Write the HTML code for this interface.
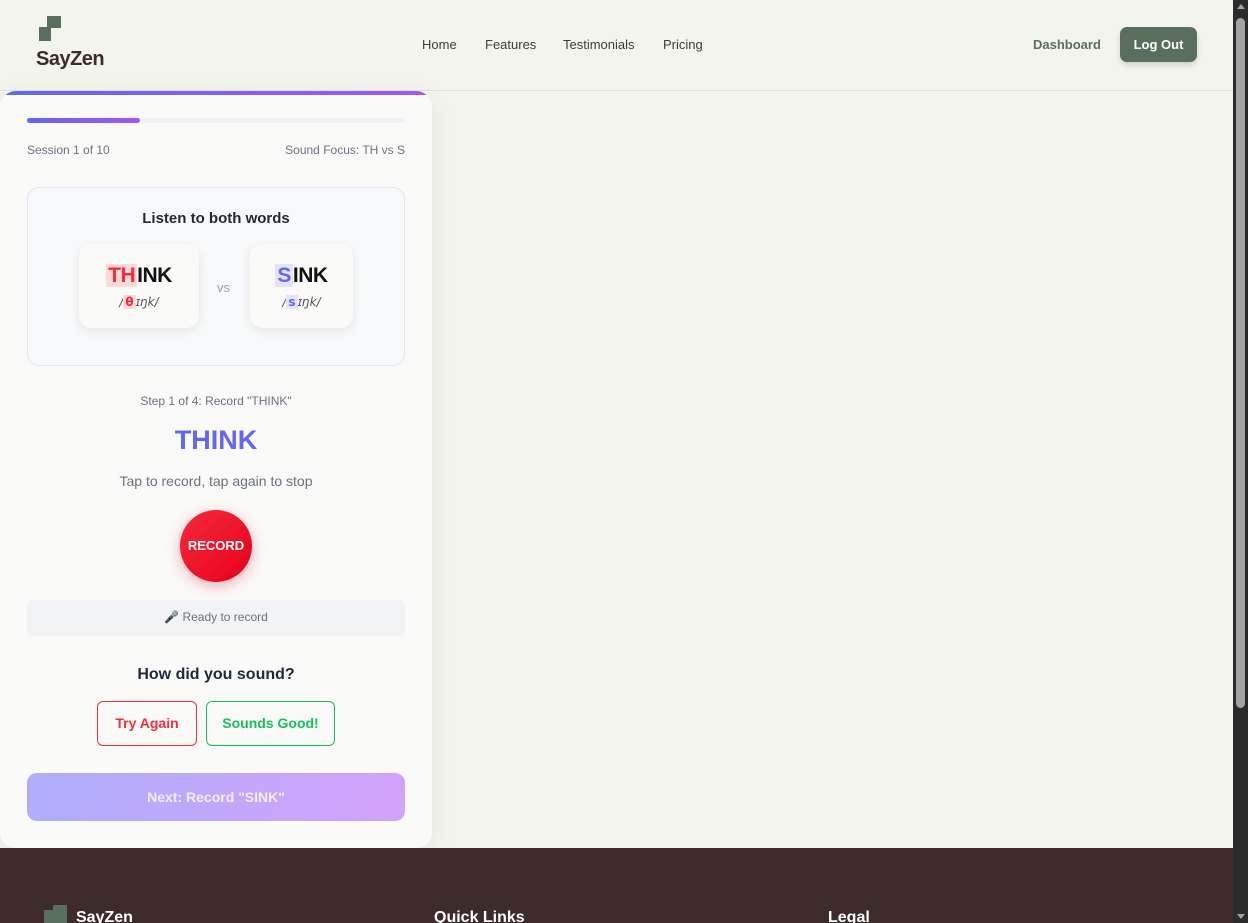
<!DOCTYPE html>
<html><head><meta charset="utf-8"><style>
*{box-sizing:border-box;margin:0;padding:0}
html,body{width:1248px;height:923px;overflow:hidden}
body{background:#f4f4ef;font-family:"Liberation Sans",sans-serif;position:relative}
.sb{position:absolute;right:0;top:0;width:15px;height:923px;background:#2b2b2b}
.sb i{position:absolute;left:3px;top:18px;width:9px;height:690px;background:#a3a3a3;border-radius:5px}
.sb b{position:absolute;left:4px;top:4px;border:4px solid transparent;border-bottom:5px solid #a3a3a3;border-top:0}
.sb u{position:absolute;left:4px;bottom:4px;border:4px solid transparent;border-top:5px solid #a3a3a3;border-bottom:0}
header{position:absolute;left:0;top:0;width:1233px;height:91px;border-bottom:1px solid #e4e4df}
.logo{position:absolute;left:36px;top:16px}
.logo .s1{position:absolute;left:11px;top:0;width:14px;height:12px;background:#5a6e5e}
.logo .s2{position:absolute;left:3px;top:11px;width:12px;height:14px;background:#5a6e5e}
.logo .t{position:absolute;left:0;top:32px;font-size:20px;font-weight:bold;color:#3d2b2b;white-space:nowrap;letter-spacing:-.5px}
nav a{position:absolute;top:37px;font-size:13px;color:#3d3d3d}
.dash{position:absolute;left:1033px;top:37px;font-size:13px;font-weight:bold;color:#5a6e5e}
.lo{position:absolute;left:1120px;top:27px;width:77px;height:35px;background:#5a6e5e;border-radius:7px;color:#fff;font-size:13px;font-weight:bold;text-align:center;line-height:35px;box-shadow:0 3px 6px rgba(0,0,0,.15)}
.card{position:absolute;left:0;top:91px;width:432px;height:757px;background:#fafaf8;border-radius:16px;box-shadow:0 4px 30px rgba(0,0,0,.06);overflow:hidden}
.card:before{content:"";position:absolute;left:0;top:0;right:0;height:4px;background:linear-gradient(90deg,#6366f1,#a855f7)}
.pb{position:absolute;left:27px;top:27px;width:378px;height:5px;background:#f1f1f5;border-radius:3px}
.pb i{display:block;width:113px;height:5px;background:linear-gradient(90deg,#6366f1,#a855f7);border-radius:3px}
.sm{position:absolute;top:52px;font-size:12px;color:#6b7280}
.box{position:absolute;left:27px;top:96px;width:378px;height:179px;border:1px solid #e3e6ec;border-radius:12px;background:#f8f9fa}
.c{position:absolute;left:0;width:100%;text-align:center}
.w{position:absolute;top:56px;height:84px;background:#fafaf8;border-radius:12px;box-shadow:0 3px 10px rgba(0,0,0,.08);text-align:center}
.w .big{margin-top:19px;font-size:21px;line-height:26px;font-weight:bold;color:#111;letter-spacing:-.5px}
.w .ph{margin-top:6px;font-size:12px;font-style:italic;color:#555;font-family:"DejaVu Sans",sans-serif}
.hr{background:#fdd9d9;color:#ef2e3e;padding:0 2px}
.hb{background:#e3e3fb;color:#6366f1;padding:0 2px}
.rec{position:absolute;left:180px;top:419px;width:72px;height:72px;border-radius:50%;background:linear-gradient(135deg,#f72a3a,#e5001c);box-shadow:0 4px 14px rgba(239,30,50,.35);color:#fff;font-size:13px;font-weight:bold;text-align:center;line-height:72px}
.st{position:absolute;left:27px;top:509px;width:378px;height:36px;background:#f2f3f5;border-radius:6px;text-align:center;line-height:34px;font-size:12px;color:#6b7280}
.b{position:absolute;top:610px;height:45px;border-radius:6px;font-size:14px;font-weight:bold;text-align:center;line-height:43px}
.nx{position:absolute;left:27px;top:682px;width:378px;height:48px;border-radius:10px;background:linear-gradient(110deg,#aeaefc,#d4a2fb);color:#f3eeff;font-size:14px;font-weight:bold;text-align:center;line-height:48px}
footer{position:absolute;left:0;top:848px;width:1233px;height:75px;background:#3d2b2c;color:#fff}
footer .h{position:absolute;top:61px;font-size:16px;font-weight:bold}
</style></head><body>
<header>
<div class="logo"><div class="s1"></div><div class="s2"></div><div class="t">SayZen</div></div>
<nav><a style="left:422px">Home</a><a style="left:485px">Features</a><a style="left:563px">Testimonials</a><a style="left:663px">Pricing</a></nav>
<div class="dash">Dashboard</div><div class="lo">Log Out</div>
</header>
<div class="card">
<div class="pb"><i></i></div>
<div class="sm" style="left:27px">Session 1 of 10</div>
<div class="sm" style="right:27px">Sound Focus: TH vs S</div>
<div class="box">
<div class="c" style="top:22px;font-size:15px;font-weight:bold;color:#1f2937">Listen to both words</div>
<div class="w" style="left:51px;width:120px"><div class="big"><span class="hr">TH</span>INK</div><div class="ph">/<span class="hr" style="font-style:normal;font-weight:bold">θ</span>ɪŋk/</div></div>
<div style="position:absolute;left:189px;top:92px;font-size:13px;color:#9ca3af">vs</div>
<div class="w" style="left:222px;width:103px"><div class="big"><span class="hb">S</span>INK</div><div class="ph">/<span class="hb" style="font-style:normal;font-weight:bold">s</span>ɪŋk/</div></div>
</div>
<div class="c" style="top:303px;font-size:12px;color:#6b7280">Step 1 of 4: Record "THINK"</div>
<div class="c" style="top:334px;font-size:27px;font-weight:bold;color:#6366f1">THINK</div>
<div class="c" style="top:382px;font-size:14px;color:#6b7280">Tap to record, tap again to stop</div>
<div class="rec">RECORD</div>
<div class="st">🎤 Ready to record</div>
<div class="c" style="top:575px;font-size:16px;font-weight:bold;color:#1f2937">How did you sound?</div>
<div class="b" style="left:97px;width:100px;border:1px solid #ef2e3e;color:#ef2e3e">Try Again</div>
<div class="b" style="left:206px;width:129px;border:1px solid #16c05a;color:#16c05a">Sounds Good!</div>
<div class="nx">Next: Record "SINK"</div>
</div>
<footer>
<div style="position:absolute;left:44px;top:62px;width:9px;height:13px;background:#5a6e5e"></div>
<div style="position:absolute;left:53px;top:57px;width:14px;height:18px;background:#5a6e5e"></div>
<div class="h" style="left:76px">SayZen</div>
<div class="h" style="left:434px">Quick Links</div>
<div class="h" style="left:828px">Legal</div>
</footer>
<div class="sb"><b></b><i></i><u></u></div>
</body></html>
